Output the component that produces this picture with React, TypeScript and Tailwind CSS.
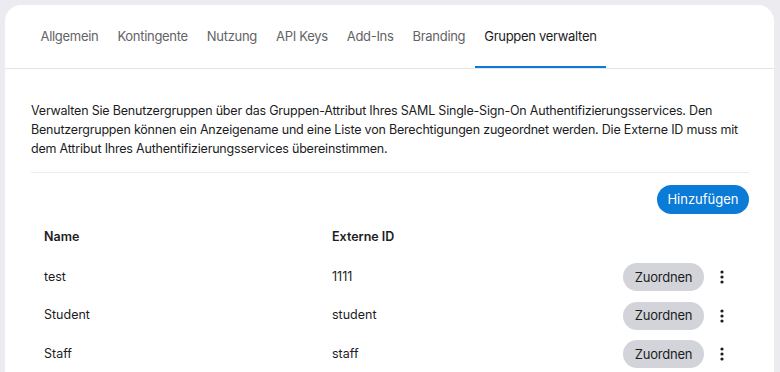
import { useState } from "react"

const tabs = ["Allgemein", "Kontingente", "Nutzung", "API Keys", "Add-Ins", "Branding", "Gruppen verwalten"]

const groups = [
  { name: "test", externalId: "1111" },
  { name: "Student", externalId: "student" },
  { name: "Staff", externalId: "staff" },
]

export default function App() {
  const [active, setActive] = useState("Gruppen verwalten")

  return (
    <div className="h-[372px] overflow-hidden bg-[#ececf0] px-[5px] pt-[5px] font-['Inter',sans-serif] text-[12.5px] text-[#1c1c1e]">
      <div className="h-full w-[769px] rounded-t-[16px] bg-white">
        <nav className="flex border-b border-[#e3e3e8] px-[26px]">
          {tabs.map((t) => (
            <button
              key={t}
              onClick={() => setActive(t)}
              className={
                "flex h-[63px] items-center border-b-2 px-[9.5px] pt-[2px] text-[13px] tracking-[-0.3px] " +
                (t === active ? "border-[#0a7bd6] text-[#1c1c1e]" : "border-transparent text-[#636366]")
              }
            >
              {t}
            </button>
          ))}
        </nav>

        <section className="pl-[26px] pr-[25px] pt-[32px]">
          <p className="pb-[14px] leading-[19px] tracking-[-0.2px]">
            Verwalten Sie Benutzergruppen über das Gruppen-Attribut Ihres SAML Single-Sign-On Authentifizierungsservices. Den
            Benutzergruppen können ein Anzeigename und eine Liste von Berechtigungen zugeordnet werden. Die Externe ID muss mit
            dem Attribut Ihres Authentifizierungsservices übereinstimmen.
          </p>
          <div className="border-t border-[#ececf0]" />

          <div className="mt-[12px] flex justify-end">
            <button className="h-[29px] w-[92px] rounded-full bg-[#0a7bd6] text-[13px] text-white">Hinzufügen</button>
          </div>

          <div className="mt-[3px]">
            <div className="grid h-[41px] grid-cols-[288px_1fr] items-center font-semibold">
              <div className="pl-[13px]">Name</div>
              <div className="pl-[13px]">Externe ID</div>
            </div>
            {groups.map((g) => (
              <div key={g.name} className="grid h-[38.5px] grid-cols-[288px_1fr_auto] items-center">
                <div className="pl-[13px]">{g.name}</div>
                <div className="pl-[13px]">{g.externalId}</div>
                <div className="flex items-center gap-[6px] pr-[15px]">
                  <button className="h-[28px] w-[81px] rounded-full bg-[#d2d4da] text-[13px] tracking-[-0.2px]">Zuordnen</button>
                  <button className="flex h-[24px] w-[24px] items-center justify-center">
                    <svg width="4" height="14" viewBox="0 0 4 14">
                      <circle cx="2" cy="2" r="1.6" fill="#1c1c1e" />
                      <circle cx="2" cy="7" r="1.6" fill="#1c1c1e" />
                      <circle cx="2" cy="12" r="1.6" fill="#1c1c1e" />
                    </svg>
                  </button>
                </div>
              </div>
            ))}
          </div>
        </section>
      </div>
    </div>
  )
}
